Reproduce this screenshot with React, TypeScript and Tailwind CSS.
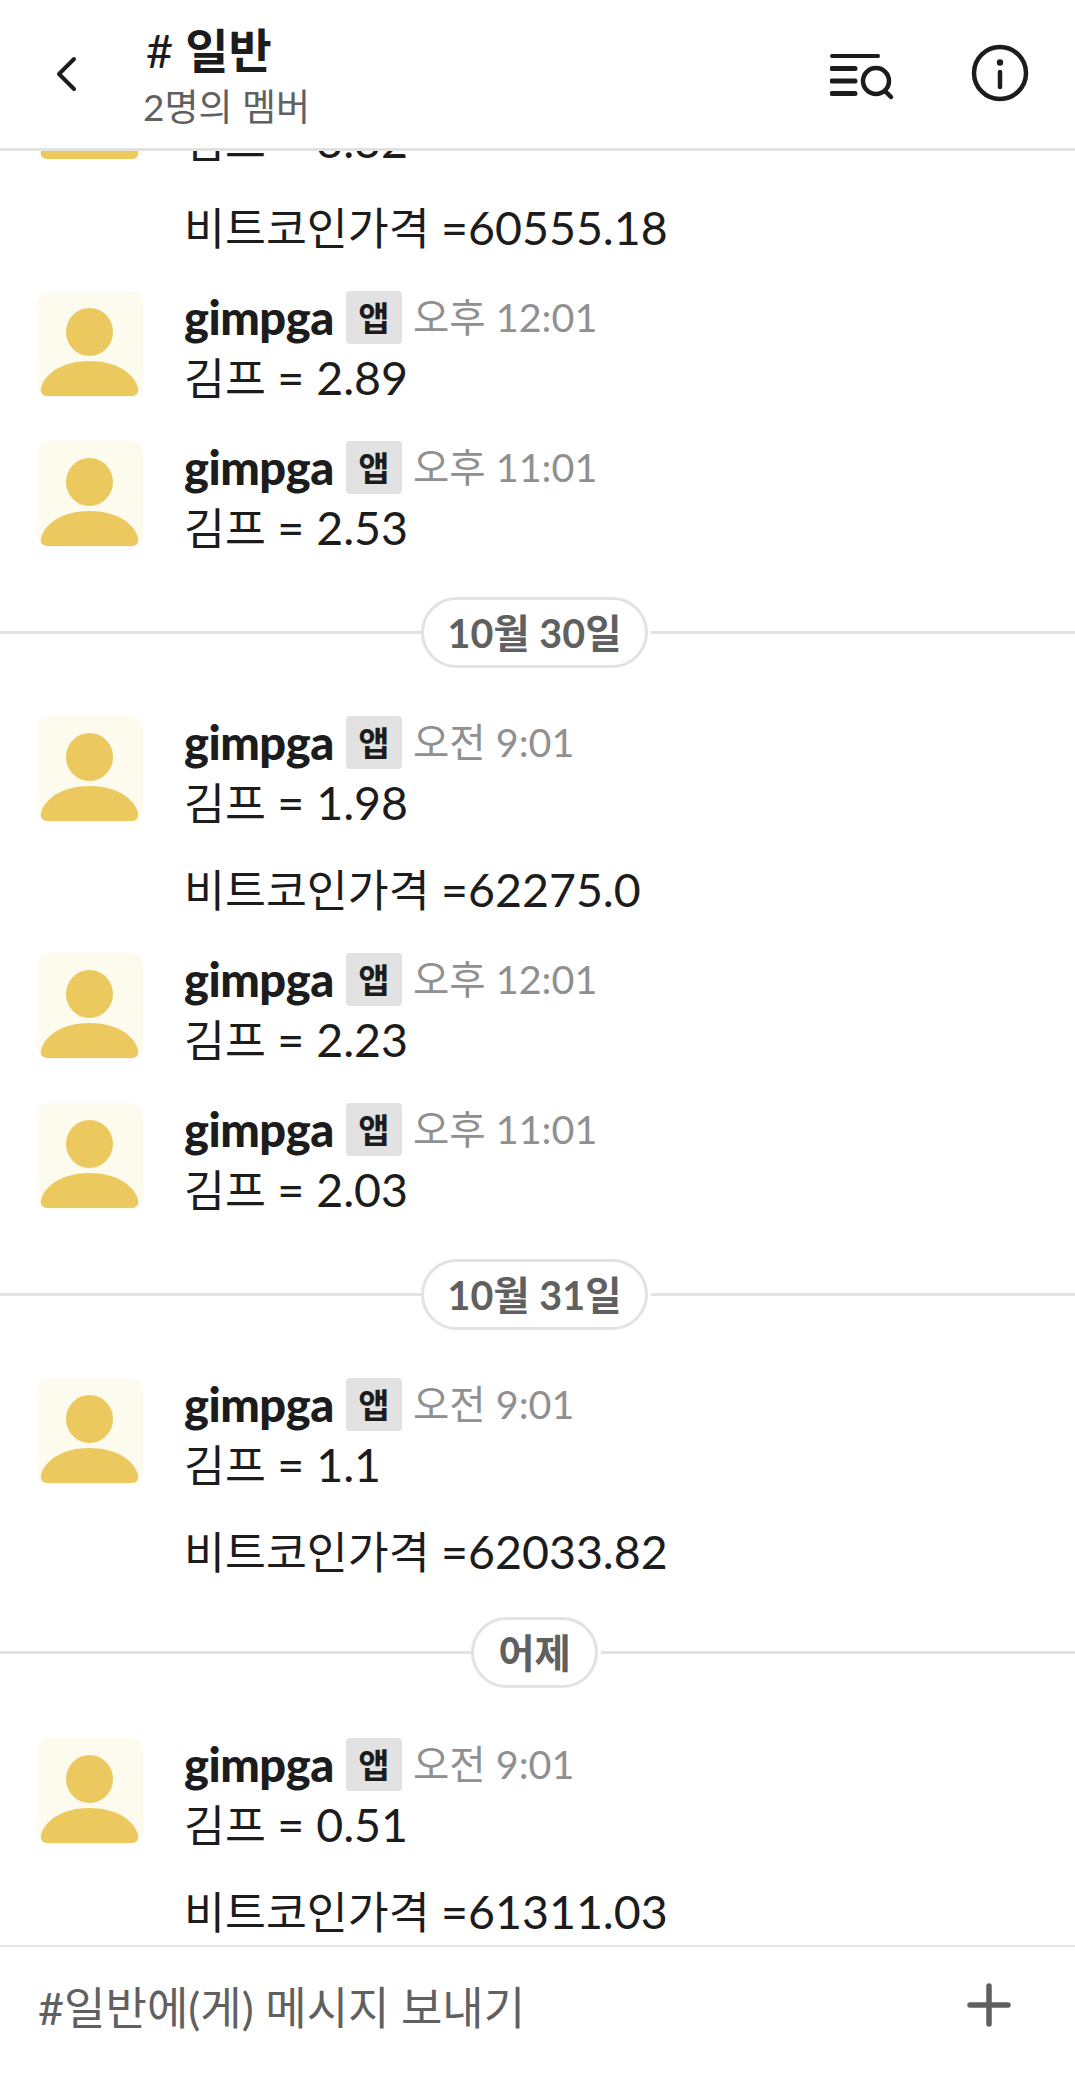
const FONT = "[font-family:Lato,'Noto_Sans_CJK_KR','Noto_Sans',sans-serif]";

function Avatar() {
  return (
    <svg width="106" height="106" viewBox="0 0 106 106" className="block shrink-0 rounded-[13px] bg-[#fdfbee]">
      <ellipse cx="52.5" cy="41" rx="23.5" ry="24" fill="#ecc95e" />
      <path d="M4 97 C8 81 28 70 52.5 70 C77 70 97 81 101 97 C102 102 99 105 95 105 L10 105 C6 105 3 102 4 97 Z" fill="#ecc95e" />
    </svg>
  );
}

function Line({ label, value }: { label: string; value: string }) {
  return (
    <div className="whitespace-pre text-[#1d1c1d] leading-[50px]">
      <span className="text-[44.5px]">{label}</span>
      <span className="text-[46.5px]">{value}</span>
    </div>
  );
}

function Message({ time, value, price }: { time: string; value: string; price?: string }) {
  return (
    <div className="pl-[37px]">
      <div className="flex h-[150.5px]">
        <Avatar />
        <div className="ml-[41px] flex flex-col">
          <div className="flex h-[53px] items-center">
            <span className="w-[150px] text-[47px] font-black leading-[53px] tracking-[-0.5px] text-[#1d1c1d]">gimpga</span>
            <span className="ml-[12px] flex h-[53px] w-[56px] items-center justify-center rounded-[4px] bg-[#e2e2e2] text-[34px] font-bold text-[#1d1c1d]">앱</span>
            <span className="ml-[11px] -translate-y-[1px] text-[39.5px] leading-[53px] text-[#909090]">{time}</span>
          </div>
          <div className="mt-[8px]">
            <Line label="김프 " value={value} />
          </div>
        </div>
      </div>
      {price && (
        <div className="-mt-[3px] mb-[3px] h-[86px] pl-[147px]">
          <Line label="비트코인가격 " value={price} />
        </div>
      )}
    </div>
  );
}

function DateDivider({ label }: { label: string }) {
  return (
    <div className="mb-[48px] mt-[5.5px] flex h-[71px] items-center">
      <div className="h-[3px] flex-1 bg-[#e2e2e2]" />
      <div className="flex h-[71px] -translate-x-[3px] items-center justify-center rounded-full border-[3px] border-[#e2e2e2] bg-white px-[24px] text-[39.5px] font-bold text-[#616061]">
        {label}
      </div>
      <div className="h-[3px] flex-1 bg-[#e2e2e2]" />
    </div>
  );
}

export default function App() {
  return (
    <div className={`${FONT} flex h-[2085px] w-[1075px] flex-col overflow-hidden bg-white`}>
      <header className="relative z-10 flex h-[151px] shrink-0 items-start border-b-[3px] border-[#e2e2e2] bg-white">
        <svg width="24" height="36" viewBox="0 0 24 36" className="ml-[54px] mt-[56px] shrink-0" fill="none" stroke="#1d1c1d" strokeWidth="4" strokeLinecap="round" strokeLinejoin="round">
          <path d="M20 3 L5 18 L20 33" />
        </svg>
        <div className="ml-[65px] flex flex-col">
          <div className="mt-[25px] h-[50px] pl-[3px] text-[47px] font-bold leading-[50px] text-[#1d1c1d]">
            <span className="mr-[12px] font-normal">#</span>일반
          </div>
          <div className="mt-[10px] text-[37px] leading-[44px] text-[#616061]">2명의 멤버</div>
        </div>
        <div className="flex-1" />
        <svg width="66" height="54" viewBox="0 0 66 54" className="mt-[50px] shrink-0" fill="none" stroke="#1d1c1d" strokeLinecap="round">
          <path d="M2 6 H48" strokeWidth="4" />
          <path d="M2 18.500 H25 M2 31 H25 M2 43.500 H25" strokeWidth="5" />
          <circle cx="46" cy="31" r="13" strokeWidth="4.500" />
          <path d="M55 41 L61 47" strokeWidth="4.500" />
        </svg>
        <svg width="58" height="58" viewBox="0 0 58 58" className="ml-[75px] mr-[46px] mt-[44px] shrink-0" fill="none" stroke="#1d1c1d" strokeLinecap="round">
          <circle cx="29" cy="29" r="26" strokeWidth="4.500" />
          <circle cx="29" cy="18.500" r="3.200" fill="#1d1c1d" stroke="none" />
          <path d="M29 28 V43" strokeWidth="4.500" />
        </svg>
      </header>
      <main className="-mt-[97px] flex-1 overflow-hidden">
        <Message time="오후 11:01" value="= 3.32" price="=60555.18" />
        <Message time="오후 12:01" value="= 2.89" />
        <Message time="오후 11:01" value="= 2.53" />
        <DateDivider label="10월 30일" />
        <Message time="오전 9:01" value="= 1.98" price="=62275.0" />
        <Message time="오후 12:01" value="= 2.23" />
        <Message time="오후 11:01" value="= 2.03" />
        <DateDivider label="10월 31일" />
        <Message time="오전 9:01" value="= 1.1" price="=62033.82" />
        <DateDivider label="어제" />
        <div className="h-[2px]" />
        <Message time="오전 9:01" value="= 0.51" price="=61311.03" />
      </main>
      <footer className="relative z-10 flex h-[140px] shrink-0 items-start justify-between border-t-[2px] border-[#e2e2e2] bg-white pl-[38px] pr-[64px]">
        <span className="mt-[34px] text-[45px] leading-[54px] text-[#616061]">#일반에(게) 메시지 보내기</span>
        <svg width="44" height="44" viewBox="0 0 44 44" className="mt-[36px]" fill="none" stroke="#616061" strokeWidth="5.500" strokeLinecap="round">
          <path d="M22 3 V41 M3 22 H41" />
        </svg>
      </footer>
    </div>
  );
}
